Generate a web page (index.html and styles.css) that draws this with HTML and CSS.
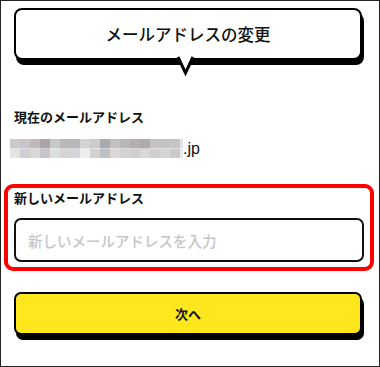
FILE: index.html
```html
<!DOCTYPE html>
<html lang="ja">
<head>
<meta charset="utf-8">
<title>メールアドレスの変更</title>
<link rel="stylesheet" href="styles.css">
</head>
<body>
<div class="frame">
  <div class="bubble">
    <h1 class="title">メールアドレスの変更</h1>
    <svg class="tail" width="22" height="22" viewBox="0 0 22 22">
      <polygon points="2,0 11,18 20,0" fill="#fff"/>
      <polyline points="3,2 10.5,18 18,2" fill="none" stroke="#000" stroke-width="3" stroke-linejoin="miter"/>
    </svg>
  </div>
  <div class="current">
    <p class="label">現在のメールアドレス</p>
    <div class="email"><span class="mask"></span><span class="domain">.jp</span></div>
  </div>
  <div class="new-box">
    <label class="label" for="mail">新しいメールアドレス</label>
    <input class="input" id="mail" type="email" placeholder="新しいメールアドレスを入力">
  </div>
  <button class="next" type="button">次へ</button>
</div>
</body>
</html>
```
FILE: styles.css
```css
* { box-sizing: border-box; }
html, body { margin: 0; padding: 0; background: #fff; }
body { font-family: "Noto Sans CJK JP", sans-serif; color: #111; }

.frame {
  width: 380px;
  height: 367px;
  border: 1px solid #222;
  padding: 7px 15px 0 13px;
  display: flex;
  flex-direction: column;
}

.bubble {
  position: relative;
  height: 52px;
  width: 348px;
  border: 2px solid #000;
  border-radius: 8px;
  box-shadow: 2px 5px 0 0 #000;
  display: flex;
  align-items: center;
  justify-content: center;
  background: #fff;
}
.title {
  margin: 0;
  font-size: 16.5px;
  font-weight: 500;
  line-height: 1;
  letter-spacing: 0;
}
.tail {
  position: absolute;
  left: 159px;
  top: 45px;
  overflow: visible;
}

.current { margin-top: 47px; }
.label {
  display: block;
  margin: 0;
  font-size: 13px;
  font-weight: 700;
  line-height: 20px;
}
.email {
  display: flex;
  align-items: center;
  margin: 12px 0 0 -4px;
  height: 19px;
}
.mask {
  width: 173px;
  height: 19px;
  background:
    linear-gradient(to right,
      #ccc9cb 0 10px, #c8c4c7 10px 20px, #c0babc 20px 30px, #aaa3a7 30px 40px,
      #c7c9c9 40px 50px, #b9b7b9 50px 60px, #bab6bb 60px 70px, #d3d4cf 70px 80px,
      #cccccc 80px 90px, #a9aaab 90px 100px, #c4bfbf 100px 110px, #b8b7ba 110px 120px,
      #b3adb3 120px 130px, #acaaab 130px 140px, #c6c2c2 140px 150px, #c1c3c6 150px 160px,
      #c8c4c2 160px 170px, #dde6ee 170px 173px) top / 100% 50% no-repeat,
    linear-gradient(to right,
      #e4e4e4 0 10px, #d0ced2 10px 20px, #dcd7d7 20px 30px, #c9c4cb 30px 40px,
      #dedddf 40px 50px, #d6d3d6 50px 60px, #d8d4dd 60px 70px, #eeeeea 70px 80px,
      #d4d2d0 80px 90px, #bfc0c3 90px 100px, #dcd6d4 100px 110px, #d3d2d4 110px 120px,
      #cfcfd1 120px 130px, #d9d9d9 130px 140px, #cfcfcd 140px 150px, #d3d6d5 150px 160px,
      #ccc9c6 160px 170px, #e4ecf2 170px 173px) bottom / 100% 50% no-repeat;
}
.domain {
  font-family: "Liberation Sans", "Noto Sans CJK JP", sans-serif;
  font-size: 16px;
  line-height: 19px;
  color: #111;
}

.new-box {
  margin: 26px -10px 0 -10px;
  border: 4px solid #ff0000;
  border-radius: 9px;
  padding: 0 6px 5px;
  display: flex;
  flex-direction: column;
}
.input {
  margin-top: 10px;
  width: 100%;
  height: 44px;
  border: 2px solid #111;
  border-radius: 7px;
  padding: 0 12px;
  font-family: "Noto Sans CJK JP", sans-serif;
  font-size: 14.5px;
  font-weight: 500;
  color: #111;
  background: #fff;
  outline: none;
  appearance: none;
}
.input::placeholder { color: #c6c6c6; }

.next {
  margin-top: 21px;
  width: 348px;
  height: 43px;
  border: 2px solid #000;
  border-radius: 7px;
  background: #ffe71e;
  box-shadow: 2px 5px 0 0 #000;
  font-family: "Noto Sans CJK JP", sans-serif;
  font-size: 13px;
  font-weight: 700;
  color: #111;
  padding: 0;
  cursor: pointer;
}
```
